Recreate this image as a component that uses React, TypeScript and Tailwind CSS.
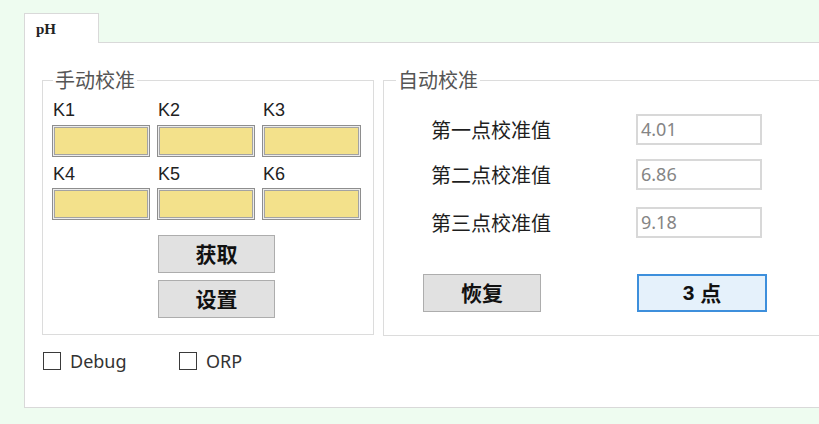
import React from "react";

const cjk = "[font-family:'Noto_Sans_CJK_SC','Noto_Sans',sans-serif]";

function YellowBox() {
  return (
    <div className="h-[32px] border border-[#8e8e8e] bg-[#f3e18b] shadow-[inset_0_0_0_1px_#ececec,inset_0_0_0_2px_#a3a3a3]" />
  );
}

function KLabel({ t }: { t: string }) {
  return (
    <div className="h-[22px] pl-[1px] text-[18px] leading-[22px] text-[#222] [font-family:'Liberation_Sans',Arial,sans-serif]">
      {t}
    </div>
  );
}

function GrayButton({ label, className = "" }: { label: string; className?: string }) {
  return (
    <div
      className={`flex items-center justify-center border border-[#adadad] bg-[#e1e1e1] text-[21px] font-bold text-[#111] ${cjk} ${className}`}
    >
      {label}
    </div>
  );
}

function ValueRow({ label, value, className = "" }: { label: string; value: string; className?: string }) {
  return (
    <div className={`flex items-center h-[31px] ${className}`}>
      <div className={`w-[205px] text-[20px] leading-[24px] text-[#1e1e1e] ${cjk}`}>{label}</div>
      <div className="w-[126px] h-[31px] border-2 border-[#d8d8d8] bg-white pl-[3px] flex items-center text-[18px] text-[#858585] [font-family:'Noto_Sans',sans-serif]">
        {value}
      </div>
    </div>
  );
}

function Check({ label, className = "" }: { label: string; className?: string }) {
  return (
    <div className={`flex items-center ${className}`}>
      <div className="w-[18px] h-[18px] border border-[#3a3a3a] bg-white" />
      <div className="ml-[9px] text-[18px] leading-[22px] text-[#333] [font-family:'Noto_Sans',sans-serif]">{label}</div>
    </div>
  );
}

export default function App() {
  return (
    <div className="w-[819px] h-[424px] overflow-hidden bg-[#eefcf0] pt-[13px] pl-[24px]">
      <div className="flex">
        <div className="relative z-10 -mb-px w-[75px] h-[30px] bg-white border border-b-0 border-[#d9d9d9] pl-[11px] pt-[6px] text-[15px] leading-[18px] font-semibold text-[#222] [font-family:'Liberation_Serif',serif]">
          pH
        </div>
      </div>
      <div className="w-[830px] h-[366px] bg-white border border-[#d9d9d9] pl-[17px] pt-[25px]">
        <div className="flex gap-[9px] items-start">
          <fieldset className="w-[332px] border border-[#dcdcdc]">
            <legend className={`ml-[10px] px-[2px] text-[20px] leading-[24px] text-[#555] ${cjk}`}>手动校准</legend>
            <div className="pl-[9px] pt-[7px] pb-[16px]">
              <div className="grid grid-cols-[98px_98px_99px] gap-x-[7px]">
                <KLabel t="K1" />
                <KLabel t="K2" />
                <KLabel t="K3" />
                <div className="mt-[4px]"><YellowBox /></div>
                <div className="mt-[4px]"><YellowBox /></div>
                <div className="mt-[4px]"><YellowBox /></div>
                <div className="mt-[6px]"><KLabel t="K4" /></div>
                <div className="mt-[6px]"><KLabel t="K5" /></div>
                <div className="mt-[6px]"><KLabel t="K6" /></div>
                <div className="mt-[3px]"><YellowBox /></div>
                <div className="mt-[3px]"><YellowBox /></div>
                <div className="mt-[3px]"><YellowBox /></div>
              </div>
              <div className="ml-[106px] mt-[15px] flex flex-col gap-[7px]">
                <GrayButton label="获取" className="w-[117px] h-[38px]" />
                <GrayButton label="设置" className="w-[117px] h-[38px]" />
              </div>
            </div>
          </fieldset>
          <fieldset className="w-[460px] border border-[#dcdcdc]">
            <legend className={`ml-[12px] px-[2px] text-[20px] leading-[24px] text-[#555] ${cjk}`}>自动校准</legend>
            <div className="pl-[47px] pt-[22px] pb-[23px]">
              <ValueRow label="第一点校准值" value="4.01" />
              <ValueRow label="第二点校准值" value="6.86" className="mt-[14px]" />
              <ValueRow label="第三点校准值" value="9.18" className="mt-[17px]" />
              <div className="flex mt-[36px]">
                <GrayButton label="恢复" className="ml-[-8px] w-[118px] h-[38px]" />
                <div
                  className={`ml-[96px] w-[130px] h-[38px] flex items-center justify-center border-2 border-[#3d8fdc] bg-[#e5f1fb] text-[21px] font-bold text-[#111] ${cjk}`}
                >
                  <span className="[font-family:'Liberation_Sans',Arial,sans-serif] mr-[6px]">3</span>点
                </div>
              </div>
            </div>
          </fieldset>
        </div>
        <div className="flex mt-[14px] ml-[1px]">
          <Check label="Debug" className="w-[136px]" />
          <Check label="ORP" />
        </div>
      </div>
    </div>
  );
}
